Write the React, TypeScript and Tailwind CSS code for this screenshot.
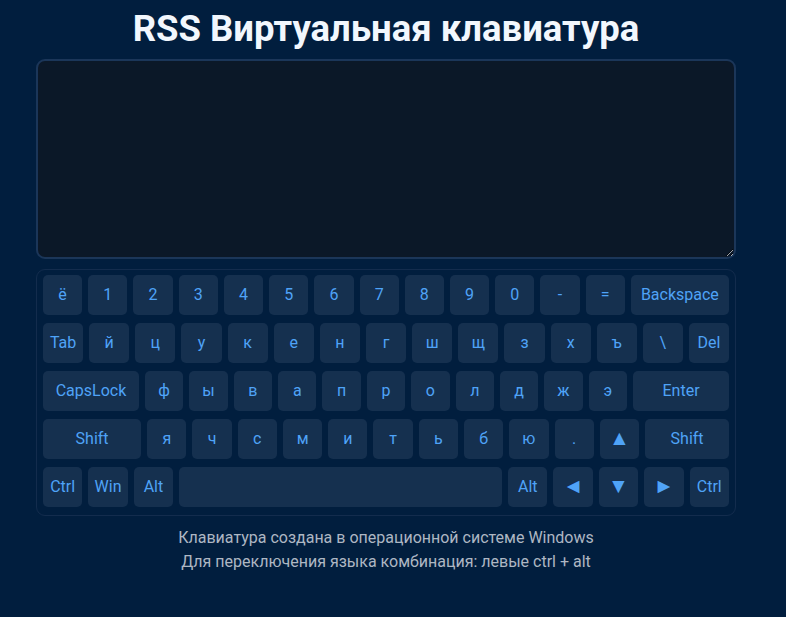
import React from 'react'

type Key = { label: string; grow?: string; arrow?: boolean }

const rows: Key[][] = [
  [
    { label: 'ё' }, { label: '1' }, { label: '2' }, { label: '3' }, { label: '4' },
    { label: '5' }, { label: '6' }, { label: '7' }, { label: '8' }, { label: '9' },
    { label: '0' }, { label: '-' }, { label: '=' },
    { label: 'Backspace', grow: 'flex-[2.5]' },
  ],
  [
    { label: 'Tab' }, { label: 'й' }, { label: 'ц' }, { label: 'у' }, { label: 'к' },
    { label: 'е' }, { label: 'н' }, { label: 'г' }, { label: 'ш' }, { label: 'щ' },
    { label: 'з' }, { label: 'х' }, { label: 'ъ' }, { label: '\\' }, { label: 'Del' },
  ],
  [
    { label: 'CapsLock', grow: 'flex-[2.5]' },
    { label: 'ф' }, { label: 'ы' }, { label: 'в' }, { label: 'а' }, { label: 'п' },
    { label: 'р' }, { label: 'о' }, { label: 'л' }, { label: 'д' }, { label: 'ж' },
    { label: 'э' },
    { label: 'Enter', grow: 'flex-[2.5]' },
  ],
  [
    { label: 'Shift', grow: 'flex-[2.5]' },
    { label: 'я' }, { label: 'ч' }, { label: 'с' }, { label: 'м' }, { label: 'и' },
    { label: 'т' }, { label: 'ь' }, { label: 'б' }, { label: 'ю' }, { label: '.' },
    { label: '▲', arrow: true },
    { label: 'Shift', grow: 'flex-[2.14]' },
  ],
  [
    { label: 'Ctrl' }, { label: 'Win' }, { label: 'Alt' },
    { label: '', grow: 'flex-[8.2]' },
    { label: 'Alt' },
    { label: '◄', arrow: true },
    { label: '▼', arrow: true },
    { label: '►', arrow: true },
    { label: 'Ctrl' },
  ],
]

function KeyButton({ k }: { k: Key }) {
  return (
    <div
      className={`${k.grow ?? 'flex-1'} ${k.arrow ? 'text-[21px]' : 'text-[16px]'} min-w-0 h-10 flex items-center justify-center rounded-[5px] bg-[#15304f] text-[#4fa3f7]`}
    >
      {k.label}
    </div>
  )
}

export default function App() {
  return (
    <div
      className="min-h-[617px] w-full bg-[#011e3e] pl-[36px]"
      style={{ fontFamily: 'Roboto, "Noto Sans", sans-serif' }}
    >
      <div className="w-[700px] pt-[11px] pb-8">
        <h1 className="text-center text-[36.5px] leading-[36px] font-bold text-[#f2f7fd] mb-[12px]">
          RSS Виртуальная клавиатура
        </h1>
        <textarea className="block w-[700px] h-[200px] rounded-[9px] border-2 border-[#1b3659] bg-[#0b1828] text-[#e5edf7] outline-none p-2" />
        <div className="mt-[10px] rounded-[9px] border border-[#132c4d] pt-[5px] px-[6px] pb-[8px] flex flex-col gap-2">
          {rows.map((row, i) => (
            <div key={i} className="flex gap-[6px]">
              {row.map((k, j) => (
                <KeyButton key={j} k={k} />
              ))}
            </div>
          ))}
        </div>
        <div className="mt-[10px] text-center text-[16px] leading-[24px] text-[#aeb7c3]">
          <p>Клавиатура создана в операционной системе Windows</p>
          <p>Для переключения языка комбинация: левые ctrl + alt</p>
        </div>
      </div>
    </div>
  )
}
